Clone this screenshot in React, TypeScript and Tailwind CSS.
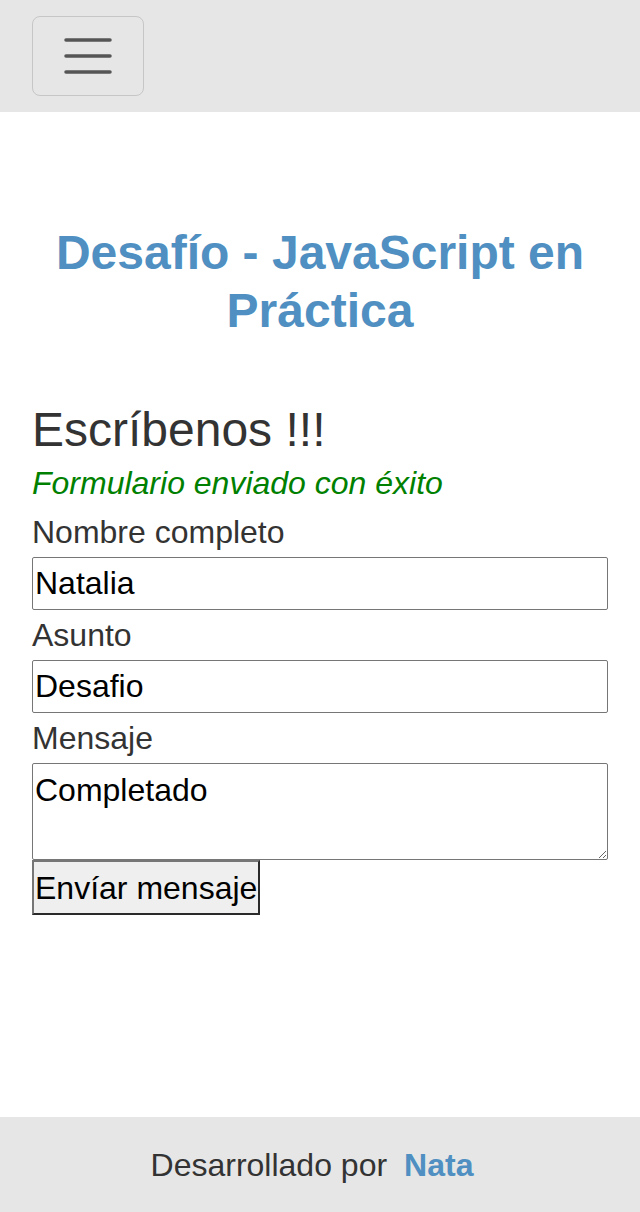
export default function App() {
  return (
    <div className="flex min-h-screen flex-col bg-white font-['Liberation_Sans',Arial,sans-serif] text-[#333]">
      {/* Navbar */}
      <header className="flex h-[112px] items-center bg-[#e6e6e6] px-8">
        <button
          type="button"
          className="flex h-[80px] w-[112px] items-center justify-center rounded-lg border border-[#c6c6c6]"
        >
          <svg width="48" height="36" viewBox="0 0 48 36" fill="none">
            <path d="M2 4h44M2 20h44M2 36h44" transform="translate(0,-2)" stroke="#555" strokeWidth="3.5" strokeLinecap="round" />
          </svg>
        </button>
      </header>

      <main className="flex-1 px-8">
        <h1 className="mt-[112px] text-center text-[48px] font-bold leading-[57.6px] text-[#4f8fc1]">
          Desafío - JavaScript en Práctica
        </h1>

        <section className="mt-[61px]">
          <h2 className="text-[48px] leading-[59px]">Escríbenos !!!</h2>
          <p className="text-[32px] italic leading-[48px] text-[#008000]">Formulario enviado con éxito</p>

          <form className="flex flex-col">
            <label className="block text-[32px] leading-[50px]">Nombre completo</label>
            <input
              className="h-[53px] w-full rounded-[2px] border border-[#767676] px-[2px] text-[32px] text-black"
              defaultValue="Natalia"
            />
            <label className="block text-[32px] leading-[50px]">Asunto</label>
            <input
              className="h-[53px] w-full rounded-[2px] border border-[#767676] px-[2px] text-[32px] text-black"
              defaultValue="Desafio"
            />
            <label className="block text-[32px] leading-[50px]">Mensaje</label>
            <textarea
              className="h-[97px] w-full rounded-[2px] border border-[#767676] p-[2px] text-[32px] leading-normal text-black"
              defaultValue="Completado"
            />
            <div>
              <button
                type="button"
                className="h-[55px] border-2 border-t-[#767676] border-l-[#767676] border-b-[#2a2a2a] border-r-[#2a2a2a] bg-[#efefef] px-[1px] text-[32px] text-black"
              >
                Envíar mensaje
              </button>
            </div>
          </form>
        </section>
      </main>

      <footer className="flex h-[95px] items-center justify-center bg-[#e6e6e6] pr-4 text-[32px]">
        <span>Desarrollado por</span>
        <span className="ml-[17px] font-bold text-[#4f8fc1]">Nata</span>
      </footer>
    </div>
  )
}
